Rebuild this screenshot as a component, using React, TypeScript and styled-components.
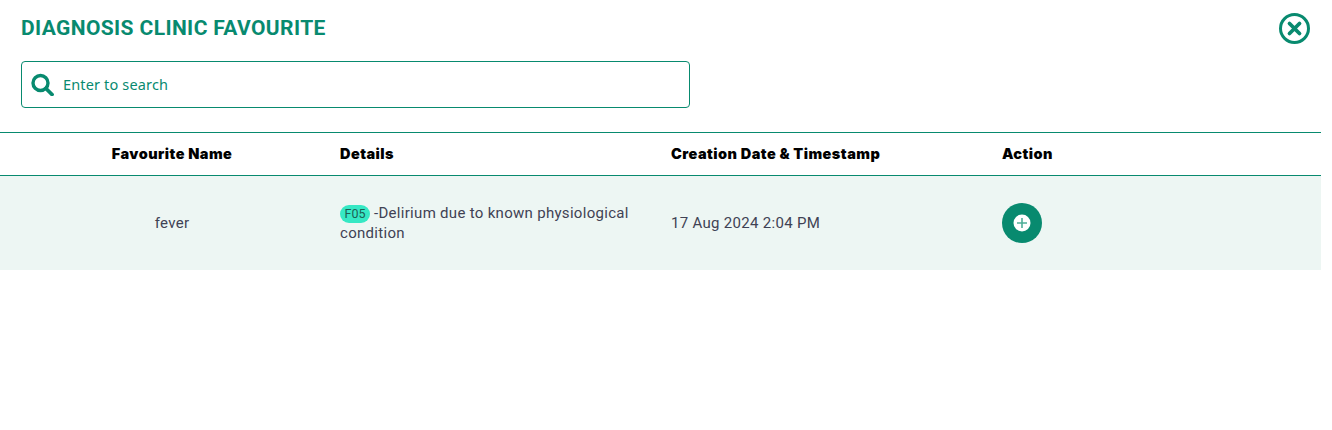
import React from 'react';
import styled, { createGlobalStyle } from 'styled-components';

const GREEN = '#088a6f';

const GlobalStyle = createGlobalStyle`
  html, body {
    margin: 0;
    padding: 0;
    background: #fff;
    overflow: hidden;
  }
`;

const Page = styled.div`
  width: 1332px;
  height: 430px;
  font-family: Roboto, sans-serif;
`;

const Top = styled.div`
  display: flex;
  justify-content: space-between;
  padding: 13px 22px 0 21px;
  height: 47px;
  box-sizing: border-box;
`;

const Title = styled.h2`
  margin: 3px 0 0;
  font-size: 21px;
  line-height: 24px;
  font-weight: 700;
  letter-spacing: 0.38px;
  color: ${GREEN};
`;

const CloseButton = styled.button`
  display: flex;
  padding: 0;
  border: none;
  background: none;
  width: 31px;
  height: 31px;
`;

const SearchBox = styled.div`
  display: flex;
  align-items: center;
  gap: 9px;
  width: 669px;
  height: 47px;
  margin: 14px 0 24px 21px;
  padding: 0 9px;
  box-sizing: border-box;
  border: 1px solid ${GREEN};
  border-radius: 4px;
`;

const SearchInput = styled.input`
  flex: 1;
  border: none;
  outline: none;
  background: none;
  padding: 0 0 2px;
  font-family: 'Noto Sans', sans-serif;
  font-size: 14.5px;
  letter-spacing: 0.15px;
  color: ${GREEN};

  &::placeholder {
    color: ${GREEN};
    opacity: 1;
  }
`;

const Row = styled.div`
  display: grid;
  grid-template-columns: 340px 331px 331px 1fr;
  width: 1321px;
`;

const HeadRow = styled(Row)`
  height: 44px;
  padding-bottom: 1px;
  align-items: center;
  border-top: 1px solid ${GREEN};
  border-bottom: 1px solid ${GREEN};
  box-sizing: border-box;
`;

const BodyRow = styled(Row)`
  height: 94px;
  align-items: center;
  background: #edf6f3;
`;

const HeadCell = styled.div<{ $center?: boolean }>`
  font-family: Inter, sans-serif;
  font-size: 14.5px;
  font-weight: 900;
  letter-spacing: 0.45px;
  color: #000;
  ${(p) => p.$center && 'text-align: center; padding-left: 4px;'}
`;

const Cell = styled.div<{ $center?: boolean }>`
  font-size: 15px;
  line-height: 20px;
  letter-spacing: 0.3px;
  color: #3f4254;
  ${(p) => p.$center && 'text-align: center; padding-left: 4px;'}
`;

const DetailCell = styled(Cell)`
  width: 300px;
`;

const CodeBadge = styled.span`
  display: inline-block;
  width: 30px;
  height: 18px;
  margin-right: 4px;
  border-radius: 9px;
  background: #36e8c4;
  color: #1d5f55;
  font-size: 12.5px;
  line-height: 18px;
  letter-spacing: 0;
  text-align: center;
`;

const AddButton = styled.button`
  display: flex;
  align-items: center;
  justify-content: center;
  width: 40px;
  height: 40px;
  padding: 0;
  border: none;
  border-radius: 50%;
  background: ${GREEN};
`;

const App = () => (
  <Page>
    <GlobalStyle />
    <Top>
      <Title>DIAGNOSIS CLINIC FAVOURITE</Title>
      <CloseButton aria-label="close">
        <svg width="31" height="31" viewBox="0 0 31 31" fill="none">
          <circle cx="15.5" cy="15.5" r="14" stroke={GREEN} strokeWidth="3" />
          <path d="M10.5 10.5l10 10M20.5 10.5l-10 10" stroke={GREEN} strokeWidth="3.8" strokeLinecap="round" />
        </svg>
      </CloseButton>
    </Top>
    <SearchBox>
      <svg width="23" height="23" viewBox="0 0 23 23" fill="none">
        <circle cx="9.5" cy="10" r="7.5" stroke={GREEN} strokeWidth="3.4" />
        <path d="M15 15.5l6 6" stroke={GREEN} strokeWidth="3.8" strokeLinecap="round" />
      </svg>
      <SearchInput placeholder="Enter to search" />
    </SearchBox>
    <HeadRow>
      <HeadCell $center>Favourite Name</HeadCell>
      <HeadCell>Details</HeadCell>
      <HeadCell>Creation Date &amp; Timestamp</HeadCell>
      <HeadCell>Action</HeadCell>
    </HeadRow>
    <BodyRow>
      <Cell $center>fever</Cell>
      <DetailCell>
        <CodeBadge>F05</CodeBadge>-Delirium due to known physiological condition
      </DetailCell>
      <Cell>17 Aug 2024 2:04 PM</Cell>
      <div>
        <AddButton aria-label="add">
          <svg width="18" height="18" viewBox="0 0 18 18">
            <circle cx="9" cy="9" r="8.5" fill="#fff" />
            <path d="M9 4v10M4 9h10" stroke="#4fae98" strokeWidth="1.6" />
          </svg>
        </AddButton>
      </div>
    </BodyRow>
  </Page>
);

export default App;
